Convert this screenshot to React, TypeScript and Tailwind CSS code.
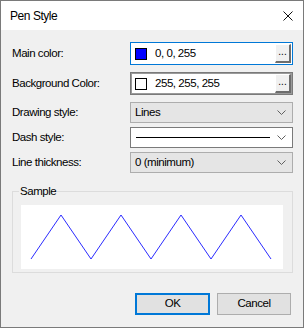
import React from 'react';

const font = { fontFamily: '"Liberation Sans", Arial, sans-serif' };

const Chevron: React.FC = () => (
  <svg width="9" height="5" viewBox="0 0 9 5" className="shrink-0">
    <path d="M0.5 0.5 L4.5 4.5 L8.5 0.5" fill="none" stroke="#606060" strokeWidth="1" />
  </svg>
);

const DotsButton: React.FC = () => (
  <div className="w-[16px] h-[19px] bg-[#f0f0f0] border-t border-l border-t-white border-l-white border-r-2 border-b-2 border-r-[#6d6d6d] border-b-[#6d6d6d] flex items-center justify-center text-[10px] tracking-normal leading-none pb-[3px]">
    ...
  </div>
);

const ColorField: React.FC<{ color: string; value: string; focused?: boolean }> = ({ color, value, focused }) => (
  <div
    className={
      'h-[23px] bg-white flex items-center pl-[4px] pr-[1px] border ' +
      (focused ? 'border-[#0078d7]' : 'border-[#7a7a7a] shadow-[inset_0_0_0_1px_#9a9a9a]')
    }
  >
    <div className="w-[12px] h-[12px] border border-black" style={{ backgroundColor: color }} />
    <span className="ml-[8px] flex-1">{value}</span>
    <DotsButton />
  </div>
);

const Combo: React.FC<{ children: React.ReactNode; white?: boolean }> = ({ children, white }) => (
  <div
    className={
      'h-[21px] flex items-center pl-[4px] pr-[6px] border ' +
      (white ? 'bg-white border-[#7a7a7a]' : 'bg-[#e5e5e5] border-[#adadad]')
    }
  >
    <div className="flex-1 flex items-center">{children}</div>
    <Chevron />
  </div>
);

export default function App() {
  return (
    <div
      className="w-[304px] h-[328px] border border-[#7a7a7a] flex flex-col text-black text-[11.5px] tracking-[-0.45px]"
      style={font}
    >
      <div className="h-[29px] bg-white flex items-center justify-between pl-[9px] pr-[10px]">
        <span className="text-[12px]">Pen Style</span>
        <svg width="10" height="10" viewBox="0 0 10 10">
          <path d="M0.5 0.5 L9.5 9.5 M9.5 0.5 L0.5 9.5" stroke="#111" strokeWidth="1" />
        </svg>
      </div>
      <div className="flex-1 bg-[#f0f0f0] pt-[12px] px-[11px] flex flex-col">
        <div className="grid grid-cols-[118px_163px] items-center gap-y-[7px]">
          <span>Main color:</span>
          <ColorField color="#0000ff" value="0, 0, 255" focused />
          <span>Background Color:</span>
          <ColorField color="#ffffff" value="255, 255, 255" />
        </div>
        <div className="grid grid-cols-[118px_163px] items-center gap-y-[4px] mt-[7px]">
          <span>Drawing style:</span>
          <Combo>Lines</Combo>
          <span>Dash style:</span>
          <Combo white>
            <div className="w-[134px] h-[1px] bg-black ml-[1px]" />
          </Combo>
          <span>Line thickness:</span>
          <Combo>0 (minimum)</Combo>
        </div>
        <fieldset className="mt-[10px] border border-[#dcdcdc] pl-[8px] pr-[9px] pt-[6px] pb-[3px]">
          <legend className="px-[1px] -ml-[2px] leading-[16px]">Sample</legend>
          <div className="bg-white h-[64px]">
            <svg width="262" height="64" viewBox="0 0 262 64">
              <polyline
                points="10,54 40,10 70,54 100,10 130,54 160,10 190,54 220,10 250,54"
                fill="none"
                stroke="#2b2bff"
                strokeWidth="1"
              />
            </svg>
          </div>
        </fieldset>
        <div className="flex justify-end gap-[7px] mt-[20px] pr-[1px]">
          <button className="w-[75px] h-[22px] bg-[#e1e1e1] border-2 border-[#0078d7]">OK</button>
          <button className="w-[74px] h-[22px] bg-[#e1e1e1] border border-[#adadad]">Cancel</button>
        </div>
      </div>
    </div>
  );
}
